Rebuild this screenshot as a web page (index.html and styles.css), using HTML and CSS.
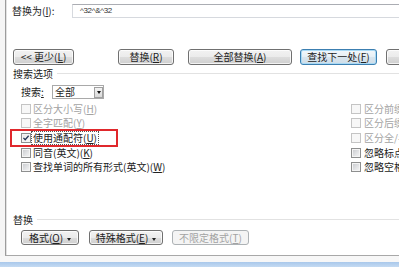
FILE: index.html
```html
<!DOCTYPE html>
<html lang="zh-CN">
<head>
<meta charset="utf-8">
<link rel="stylesheet" href="styles.css">
</head>
<body>
<div class="screen">
  <div class="dialog">
    <div class="replace-row">
      <span class="lbl">替换为(<u>I</u>):</span>
      <div class="input">^32^&amp;^32</div>
    </div>
    <div class="btn-row">
      <button class="btn b-less">&lt;&lt; 更少(<u>L</u>)</button>
      <button class="btn b-rep">替换(<u>R</u>)</button>
      <button class="btn b-all">全部替换(<u>A</u>)</button>
      <button class="btn btn-default b-next">查找下一处(<u>F</u>)</button>
      <button class="btn b-cancel">取消</button>
    </div>
    <div class="group-head"><span>搜索选项</span></div>
    <div class="search-row">
      <span class="lbl">搜索<u>:</u></span>
      <div class="select"><span>全部</span><span class="arrow"><span class="tri"></span></span></div>
    </div>
    <div class="opts">
      <div class="opt dis"><span class="cb"></span><span>区分大小写(<u>H</u>)</span></div>
      <div class="opt opt-r dis"><span class="cb"></span><span>区分前缀(<u>X</u>)</span></div>
      <div class="opt dis"><span class="cb"></span><span>全字匹配(<u>Y</u>)</span></div>
      <div class="opt opt-r dis"><span class="cb"></span><span>区分后缀(<u>T</u>)</span></div>
      <div class="opt"><span class="cb on"><svg viewBox="0 0 10 10" width="8" height="8"><path d="M1.8 4.8 L4 7.2 L8.3 2.2" fill="none" stroke="#223455" stroke-width="1.5"/></svg></span><span class="focus">使用通配符(<u>U</u>)</span><span class="mark"></span></div>
      <div class="opt opt-r dis"><span class="cb"></span><span>区分全/半角(<u>M</u>)</span></div>
      <div class="opt"><span class="cb"></span><span>同音(英文)(<u>K</u>)</span></div>
      <div class="opt opt-r"><span class="cb"></span><span>忽略标点符号(<u>S</u>)</span></div>
      <div class="opt"><span class="cb"></span><span>查找单词的所有形式(英文)(<u>W</u>)</span></div>
      <div class="opt opt-r"><span class="cb"></span><span>忽略空格(<u>W</u>)</span></div>
    </div>
    <div class="group-head head-2"><span>替换</span></div>
    <div class="fmt-row">
      <button class="btn f-fmt">格式(<u>O</u>)<span class="dd"></span></button>
      <button class="btn f-spec">特殊格式(<u>E</u>)<span class="dd"></span></button>
      <button class="btn btn-dis f-none">不限定格式(<u>T</u>)</button>
    </div>
  </div>
  <div class="gap"></div>
  <div class="taskbar"></div>
</div>
</body>
</html>
```

FILE: styles.css
```css
html, body {
  margin: 0;
  padding: 0;
}
body {
  background: #f5f5f5;
  font-family: "Noto Sans CJK SC", "Noto Sans", sans-serif;
  font-size: 10px;
  color: #222;
  overflow: hidden;
}
u { text-decoration-thickness: 1px; text-underline-offset: 1px; }

.screen {
  width: 399px;
  height: 267px;
  display: flex;
  flex-direction: column;
  overflow: hidden;
}
.dialog {
  flex: none;
  height: 255px;
  margin-left: 5px;
  border-left: 1px solid #9c9c9c;
  border-bottom: 1px solid #a8a8a8;
  box-shadow: inset 1px 0 0 #e2e2e2;
  background: #fff;
  display: flex;
  flex-direction: column;
  overflow: hidden;
}
.gap {
  flex: none;
  height: 6px;
  background: #f7f7f7;
}
.taskbar {
  flex: 1;
  background: linear-gradient(#a9c8eb, #c4daf2);
}

/* replace-with row */
.replace-row {
  display: flex;
  align-items: center;
  margin-top: 4px;
  height: 14px;
}
.replace-row .lbl {
  flex: none;
  width: 60px;
  padding-left: 6px;
  line-height: 14px;
  white-space: nowrap;
}
.input {
  flex: none;
  width: 400px;
  height: 14px;
  box-sizing: border-box;
  border: 1px solid #d6d9de;
  border-top-color: #abadb3;
  padding-left: 7px;
  font-family: "Liberation Sans", sans-serif;
  font-size: 8px;
  letter-spacing: -0.3px;
  line-height: 12px;
  color: #333;
}

/* buttons */
.btn {
  flex: none;
  height: 16px;
  box-sizing: border-box;
  border: 1px solid #707070;
  border-radius: 3px;
  background: linear-gradient(#f2f2f2 0%, #ebebeb 50%, #dddddd 51%, #cfcfcf 100%);
  box-shadow: inset 0 0 0 1px rgba(255, 255, 255, 0.75);
  font: inherit;
  color: #222;
  padding: 0;
  line-height: 14px;
  text-align: center;
  white-space: nowrap;
}
.btn-row {
  display: flex;
  margin-top: 31px;
  height: 16px;
  padding-left: 7px;
}
.b-less { width: 61px; }
.b-rep { width: 56px; margin-left: 44px; }
.b-all { width: 104px; margin-left: 14px; }
.b-next { width: 77px; margin-left: 8px; }
.b-cancel { width: 60px; margin-left: 9px; }
.btn-default {
  border-color: #3c7fb1;
  background: linear-gradient(#f3f8fb 0%, #e6eff5 50%, #d8e5ee 51%, #cfdde8 100%);
  box-shadow: inset 0 0 0 1px #a9daf5;
}
.btn-dis {
  border-color: #adb2b5;
  background: #f4f4f4;
  box-shadow: none;
  color: #a3a3a3;
}

/* group headers */
.group-head {
  display: flex;
  align-items: center;
  height: 11px;
  line-height: 11px;
  padding-left: 7px;
  margin-top: 3px;
  white-space: nowrap;
}
.group-head::after {
  content: "";
  flex: 1;
  height: 1px;
  background: #e2e2e2;
  margin-left: 4px;
}
.head-2 { margin-top: 40px; }

/* search row */
.search-row {
  display: flex;
  align-items: center;
  height: 14px;
  margin-top: 6px;
  padding-left: 15px;
}
.search-row .lbl {
  flex: none;
  width: 31px;
  line-height: 14px;
}
.select {
  flex: none;
  width: 52px;
  height: 14px;
  box-sizing: border-box;
  border: 1px solid #a9a9a9;
  display: flex;
  align-items: center;
  padding-left: 2px;
  line-height: 12px;
}
.select .arrow {
  margin-left: auto;
  width: 9px;
  height: 11px;
  box-sizing: border-box;
  border: 1px solid #a0a0a0;
  background: linear-gradient(#f4f4f4, #d9d9d9);
  display: flex;
  align-items: center;
  justify-content: center;
}
.tri {
  width: 0;
  height: 0;
  border-left: 2.5px solid transparent;
  border-right: 2.5px solid transparent;
  border-top: 3px solid #111;
}

/* options grid */
.opts {
  display: grid;
  grid-template-columns: 330px auto;
  grid-template-rows: 14px 14px 15px 15px 14px;
  margin-top: 3px;
  padding-left: 15px;
}
.opt {
  display: flex;
  align-items: center;
  white-space: nowrap;
  position: relative;
  line-height: 12px;
}
.cb {
  flex: none;
  width: 10px;
  height: 10px;
  box-sizing: border-box;
  margin-right: 2px;
  border: 1px solid #8e8f8f;
  background: linear-gradient(135deg, #c6c8cc 0%, #e4e5e7 60%, #f6f6f6 100%);
  box-shadow: inset 0 0 0 1px #f4f4f4;
  display: flex;
  align-items: center;
  justify-content: center;
}
.opt-r .cb { margin-right: 3px; }
.cb.on {
  background: linear-gradient(135deg, #e8e8e8, #fafafa);
}
.dis { color: #a3a3a3; }
.dis .cb {
  border-color: #c4c4c4;
  background: #f7f7f7;
  box-shadow: none;
}
.focus {
  outline: 1px dotted #555;
  padding: 0 1px;
  margin-left: -1px;
}
.mark {
  position: absolute;
  left: -11px;
  top: -1px;
  width: 108px;
  height: 18px;
  box-sizing: border-box;
  border: 2px solid #e0282c;
}

/* format buttons */
.fmt-row {
  display: flex;
  margin-top: 5px;
  height: 15px;
  padding-left: 15px;
}
.fmt-row .btn {
  height: 15px;
  line-height: 13px;
}
.f-fmt { width: 58px; }
.f-spec { width: 74px; margin-left: 10px; }
.f-none { width: 77px; margin-left: 9px; }
.dd {
  display: inline-block;
  vertical-align: middle;
  margin-left: 4px;
  width: 0;
  height: 0;
  border-left: 2.5px solid transparent;
  border-right: 2.5px solid transparent;
  border-top: 3px solid #222;
}
```
